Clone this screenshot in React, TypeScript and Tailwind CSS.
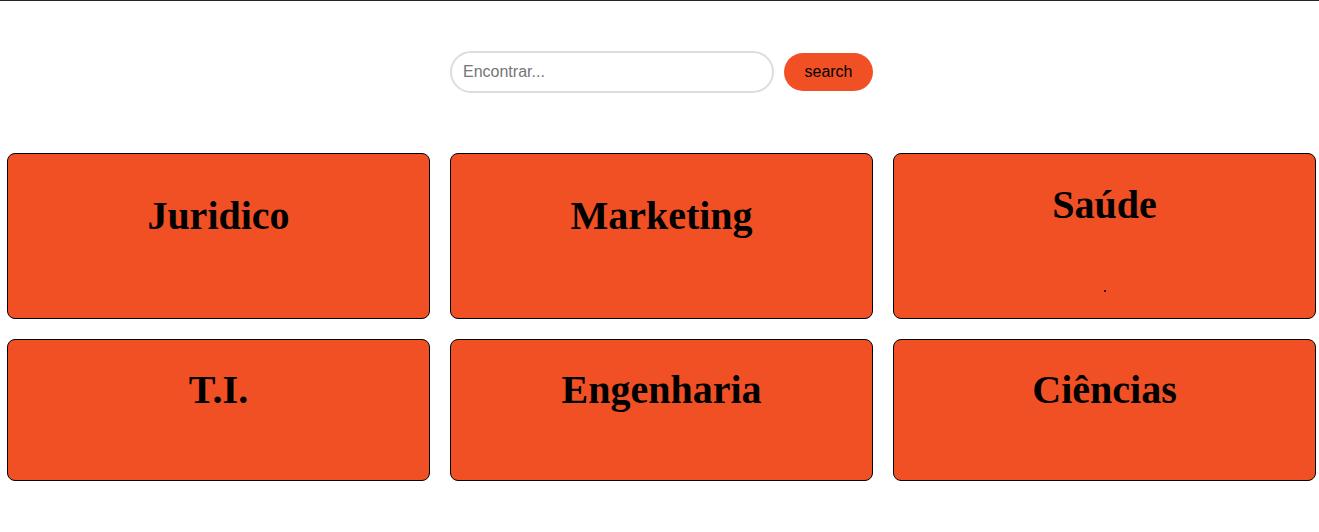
export default function App() {
  const serif = { fontFamily: '"Liberation Serif", "Times New Roman", serif' };

  return (
    <div className="min-h-screen bg-white border-t border-[#212529]" style={{ fontFamily: '"Liberation Sans", Arial, sans-serif' }}>
      <form className="flex justify-center items-center gap-[10px] pt-[50px] pl-[4px]" onSubmit={(e) => e.preventDefault()}>
        <input
          type="text"
          placeholder="Encontrar..."
          className="w-[324px] h-[42px] px-[11px] border-2 border-[#dddddd] rounded-full text-base text-gray-800 placeholder:text-[#757575] focus:outline-none"
        />
        <button type="submit" className="w-[89px] h-[38px] rounded-full bg-[#f15025] text-black text-base">
          search
        </button>
      </form>

      <div className="grid grid-cols-3 gap-x-[20px] gap-y-[20px] pl-[7px] pr-[3px] mt-[60px]">
        <div className="h-[166px] bg-[#f15025] border border-black rounded-lg text-center pt-[32px]">
          <h2 className="text-[40px] font-bold text-black" style={serif}>Juridico</h2>
        </div>
        <div className="h-[166px] bg-[#f15025] border border-black rounded-lg text-center pt-[32px]">
          <h2 className="text-[40px] font-bold text-black" style={serif}>Marketing</h2>
        </div>
        <div className="h-[166px] bg-[#f15025] border border-black rounded-lg text-center pt-[21px] flex flex-col items-center">
          <h2 className="text-[40px] font-bold text-black" style={serif}>Saúde</h2>
          <span className="block w-[2px] h-[2px] bg-[#2a1208] mt-[55px]" />
        </div>
        <div className="h-[142px] bg-[#f15025] border border-black rounded-lg text-center pt-[20px]">
          <h2 className="text-[40px] font-bold text-black" style={serif}>T.I.</h2>
        </div>
        <div className="h-[142px] bg-[#f15025] border border-black rounded-lg text-center pt-[20px]">
          <h2 className="text-[40px] font-bold text-black" style={serif}>Engenharia</h2>
        </div>
        <div className="h-[142px] bg-[#f15025] border border-black rounded-lg text-center pt-[20px]">
          <h2 className="text-[40px] font-bold text-black" style={serif}>Ciências</h2>
        </div>
      </div>
    </div>
  );
}
